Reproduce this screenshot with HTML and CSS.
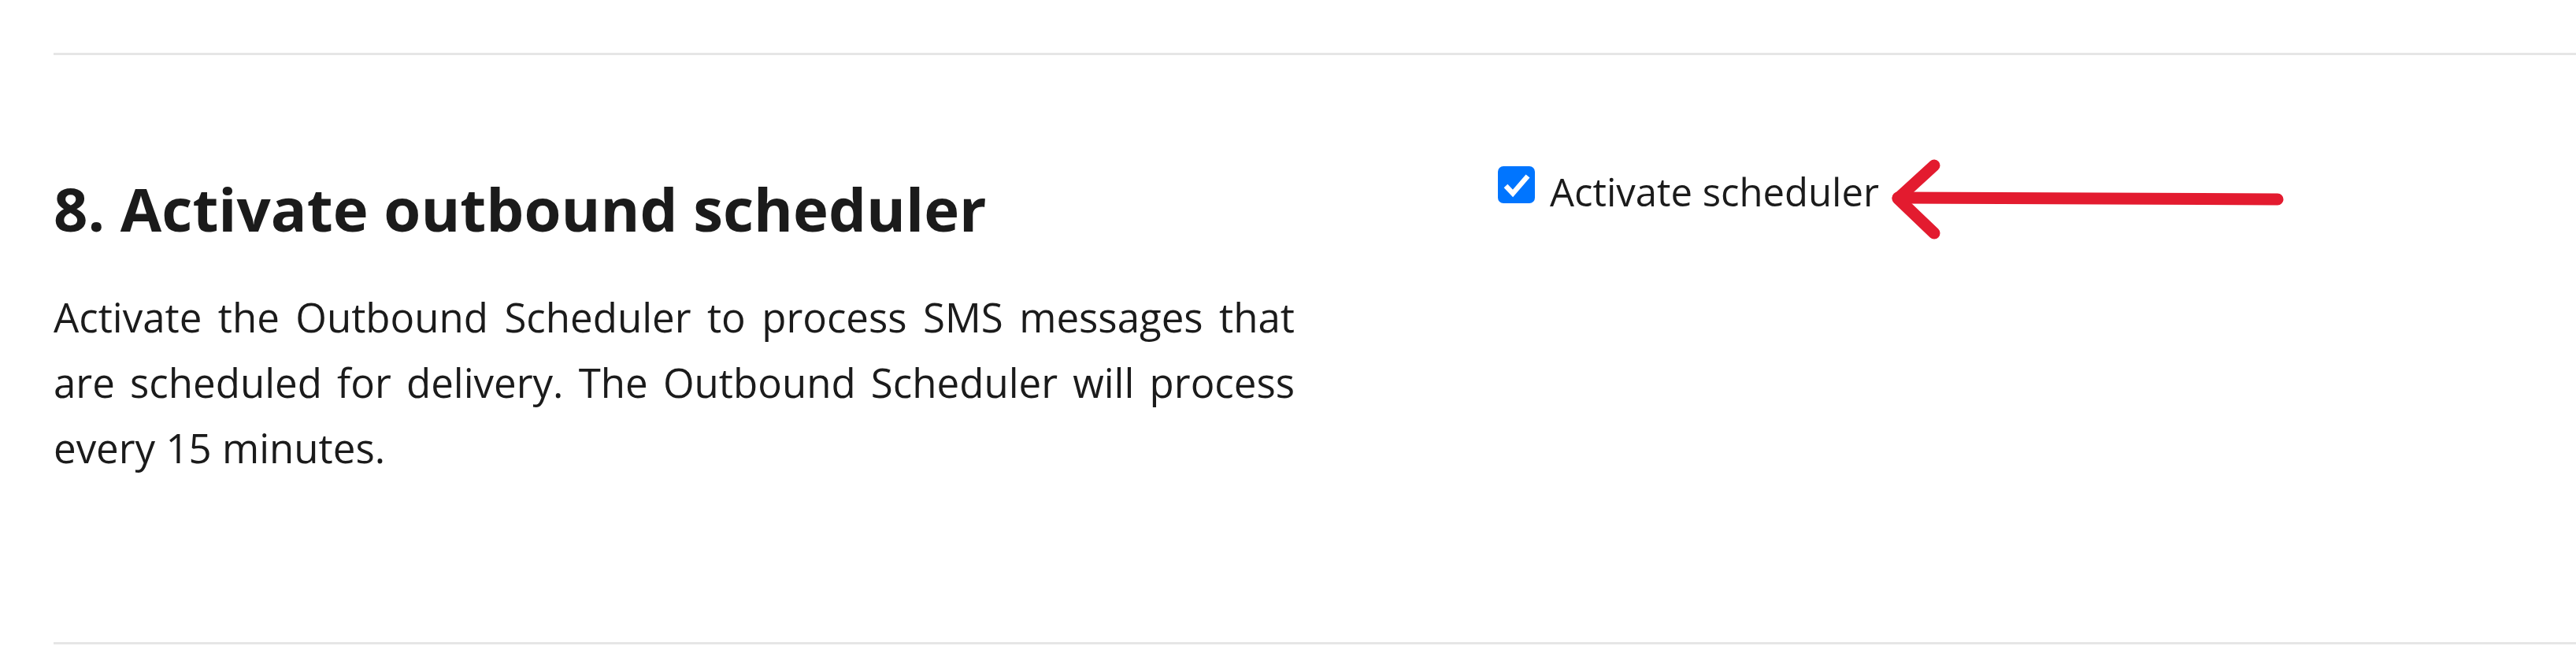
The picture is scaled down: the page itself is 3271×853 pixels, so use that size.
FILE: index.html
```html
<!DOCTYPE html>
<html lang="en">
<head>
<meta charset="utf-8">
<title>Activate outbound scheduler</title>
<link rel="stylesheet" href="styles.css">
</head>
<body>
<main class="page">
  <section class="step">
    <div class="step-info">
      <h3 class="step-title">8. Activate outbound scheduler</h3>
      <p class="step-text">Activate the Outbound Scheduler to process SMS messages that are scheduled for delivery. The Outbound Scheduler will process every 15 minutes.</p>
    </div>
    <div class="step-control">
      <label class="form-check">
        <span class="check" role="checkbox" aria-checked="true">
          <svg viewBox="0 0 47 47" width="47" height="47" aria-hidden="true">
            <rect x="0" y="0" width="47" height="47" rx="7" ry="7" fill="#0075ff"/>
            <polyline points="10,25 19,34.5 38,12.5" fill="none" stroke="#ffffff" stroke-width="6.5" stroke-linejoin="miter" stroke-linecap="butt"/>
          </svg>
        </span>
        <span class="check-label">Activate scheduler</span>
      </label>
      <svg class="annot-arrow" viewBox="0 0 520 110" width="520" height="110" aria-hidden="true">
        <g fill="none" stroke="#e31b2f" stroke-width="15" stroke-linecap="round" stroke-linejoin="round">
          <path d="M503 53 L21 51"/>
          <path d="M67 10 L21 52 L67 96"/>
        </g>
      </svg>
    </div>
  </section>
</main>
</body>
</html>
```
FILE: styles.css
```css
html, body {
  margin: 0;
  padding: 0;
  background: #ffffff;
}

body {
  font-family: "Open Sans", "Noto Sans", "Liberation Sans", sans-serif;
  color: #1b1b1b;
}

.page {
  padding: 67px 0 0 68px;
}

.step {
  display: grid;
  grid-template-columns: 1576px 1fr;
  column-gap: 258px;
  align-items: start;
  padding: 130px 0 205px;
  border-top: 3px solid #e6e6e6;
  border-bottom: 3px solid #e6e6e6;
}

.step-info {
  min-width: 0;
}

.step-title {
  margin: 18px 0 0;
  font-size: 76px;
  font-weight: 700;
  line-height: 93.6px;
  color: #1b1b1b;
}

.step-text {
  margin: 49px 0 0;
  font-size: 51px;
  line-height: 83px;
  text-align: justify;
  color: #1b1b1b;
}

.step-control {
  position: relative;
}

.form-check {
  display: flex;
  align-items: flex-start;
  column-gap: 19px;
}

.check {
  display: block;
  width: 47px;
  height: 47px;
  margin-top: 11px;
  flex: none;
}

.check svg {
  display: block;
}

.check-label {
  display: block;
  margin-top: 7px;
  font-size: 49px;
  line-height: 72px;
  color: #1b1b1b;
}

.annot-arrow {
  position: absolute;
  left: 487px;
  top: 0;
  display: block;
}
```
